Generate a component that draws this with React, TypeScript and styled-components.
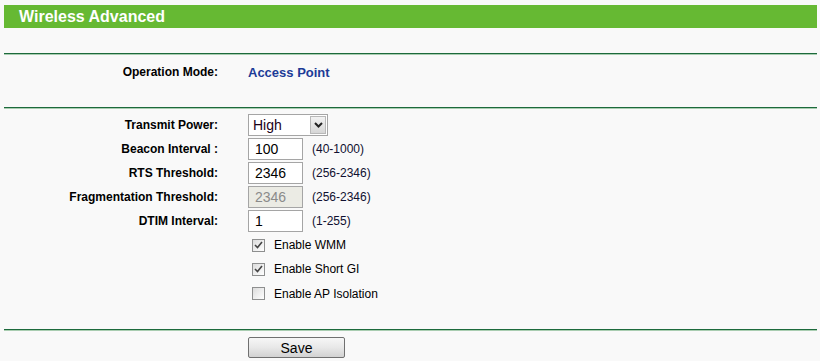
import styled, { createGlobalStyle } from 'styled-components';

const GlobalStyle = createGlobalStyle`
    html, body {
        margin: 0;
        padding: 0;
        background: #f9f9f9;
    }
    body {
        font-family: "Liberation Sans", Arial, sans-serif;
        font-size: 12px;
        color: #000;
    }
`;

const Page = styled.div`
    width: 813px;
    padding: 5px 0 0 4px;
`;

const TitleBar = styled.div`
    height: 23px;
    line-height: 23px;
    background-color: #66b933;
    color: #ffffff;
    font-size: 16px;
    font-weight: 700;
    padding-left: 15px;
`;

const Divider = styled.div<{ $top: number }>`
    margin-top: ${(p) => p.$top}px;
    height: 1px;
    background-color: #1d6a3c;
    border-bottom: 1px solid #a9cdb1;
`;

const Section = styled.div<{ $top: number; $bottom: number }>`
    padding: ${(p) => p.$top}px 0 ${(p) => p.$bottom}px;
`;

const Row = styled.div<{ $h?: number }>`
    display: grid;
    grid-template-columns: 214px 1fr;
    column-gap: 30px;
    align-items: center;
    height: ${(p) => p.$h ?? 24}px;
`;

const Label = styled.div`
    text-align: right;
    font-weight: 700;
`;

const Value = styled.div`
    display: flex;
    align-items: center;
    gap: 9px;
`;

const ModeText = styled.span`
    color: #1c3b97;
    font-weight: 700;
    font-size: 13px;
`;

const Input = styled.input`
    box-sizing: border-box;
    width: 55px;
    height: 22px;
    margin: 0;
    padding: 0 6px;
    border: 1px solid #a5a5a5;
    background: #ffffff;
    font-family: "Liberation Sans", Arial, sans-serif;
    font-size: 14px;
    color: #000;
    &:disabled {
        background: #ebebe4;
        color: #8a8a8a;
    }
`;

const Hint = styled.span`
    font-size: 12px;
    color: #101030;
`;

const Select = styled.div`
    box-sizing: border-box;
    width: 80px;
    height: 22px;
    border: 1px solid #a5a5a5;
    background: #ffffff;
    display: flex;
    align-items: stretch;
    font-size: 14px;
`;

const SelectText = styled.span`
    flex: 1;
    display: flex;
    align-items: center;
    padding-left: 4px;
    color: #1a0018;
`;

const SelectArrow = styled.span`
    width: 16px;
    margin: 1px;
    box-sizing: border-box;
    border: 1px solid #b8b8b8;
    background: linear-gradient(#f2f2f2, #d6d6d6);
    display: flex;
    align-items: center;
    justify-content: center;
`;

const CheckRow = styled.label`
    display: flex;
    align-items: center;
    gap: 9px;
    margin-left: 4px;
    font-size: 12px;
    cursor: default;
`;

const Box = styled.span`
    box-sizing: border-box;
    width: 13px;
    height: 13px;
    border: 1px solid #8e8f8f;
    background: linear-gradient(135deg, #dcdcdc, #ffffff);
    display: flex;
    align-items: center;
    justify-content: center;
`;

const SaveButton = styled.button`
    width: 97px;
    height: 21px;
    margin: 0;
    padding: 0;
    border: 1px solid #707070;
    border-radius: 2px;
    background: linear-gradient(#f6f6f6 0%, #e8e8e8 50%, #d2d2d2 100%);
    font-family: "Liberation Sans", Arial, sans-serif;
    font-size: 14px;
    color: #000;
`;

function Check({ checked, children }: { checked: boolean; children: string }) {
    return (
        <CheckRow>
            <Box>
                {checked && (
                    <svg width="9" height="8" viewBox="0 0 9 8">
                        <path d="M1 4 L3.5 6.5 L8 1" fill="none" stroke="#444" strokeWidth="1.6" />
                    </svg>
                )}
            </Box>
            {children}
        </CheckRow>
    );
}

export default function App() {
    return (
        <Page>
            <GlobalStyle />
            <TitleBar>Wireless Advanced</TitleBar>
            <Divider $top={25} />

            <Section $top={5} $bottom={23}>
                <Row>
                    <Label>Operation Mode:</Label>
                    <Value>
                        <ModeText>Access Point</ModeText>
                    </Value>
                </Row>
            </Section>

            <Divider $top={0} />

            <Section $top={4} $bottom={23}>
                <Row>
                    <Label>Transmit Power:</Label>
                    <Value>
                        <Select>
                            <SelectText>High</SelectText>
                            <SelectArrow>
                                <svg width="9" height="6" viewBox="0 0 9 6">
                                    <path d="M1 1 L4.5 4.5 L8 1" fill="none" stroke="#222" strokeWidth="2" />
                                </svg>
                            </SelectArrow>
                        </Select>
                    </Value>
                </Row>
                <Row>
                    <Label>Beacon Interval :</Label>
                    <Value>
                        <Input defaultValue="100" />
                        <Hint>(40-1000)</Hint>
                    </Value>
                </Row>
                <Row>
                    <Label>RTS Threshold:</Label>
                    <Value>
                        <Input defaultValue="2346" />
                        <Hint>(256-2346)</Hint>
                    </Value>
                </Row>
                <Row>
                    <Label>Fragmentation Threshold:</Label>
                    <Value>
                        <Input defaultValue="2346" disabled />
                        <Hint>(256-2346)</Hint>
                    </Value>
                </Row>
                <Row>
                    <Label>DTIM Interval:</Label>
                    <Value>
                        <Input defaultValue="1" />
                        <Hint>(1-255)</Hint>
                    </Value>
                </Row>
                <Row>
                    <span />
                    <Check checked>Enable WMM</Check>
                </Row>
                <Row>
                    <span />
                    <Check checked>Enable Short GI</Check>
                </Row>
                <Row $h={25}>
                    <span />
                    <Check checked={false}>Enable AP Isolation</Check>
                </Row>
            </Section>

            <Divider $top={0} />

            <Section $top={6} $bottom={0}>
                <Row $h={21}>
                    <span />
                    <div>
                        <SaveButton type="button">Save</SaveButton>
                    </div>
                </Row>
            </Section>
        </Page>
    );
}
